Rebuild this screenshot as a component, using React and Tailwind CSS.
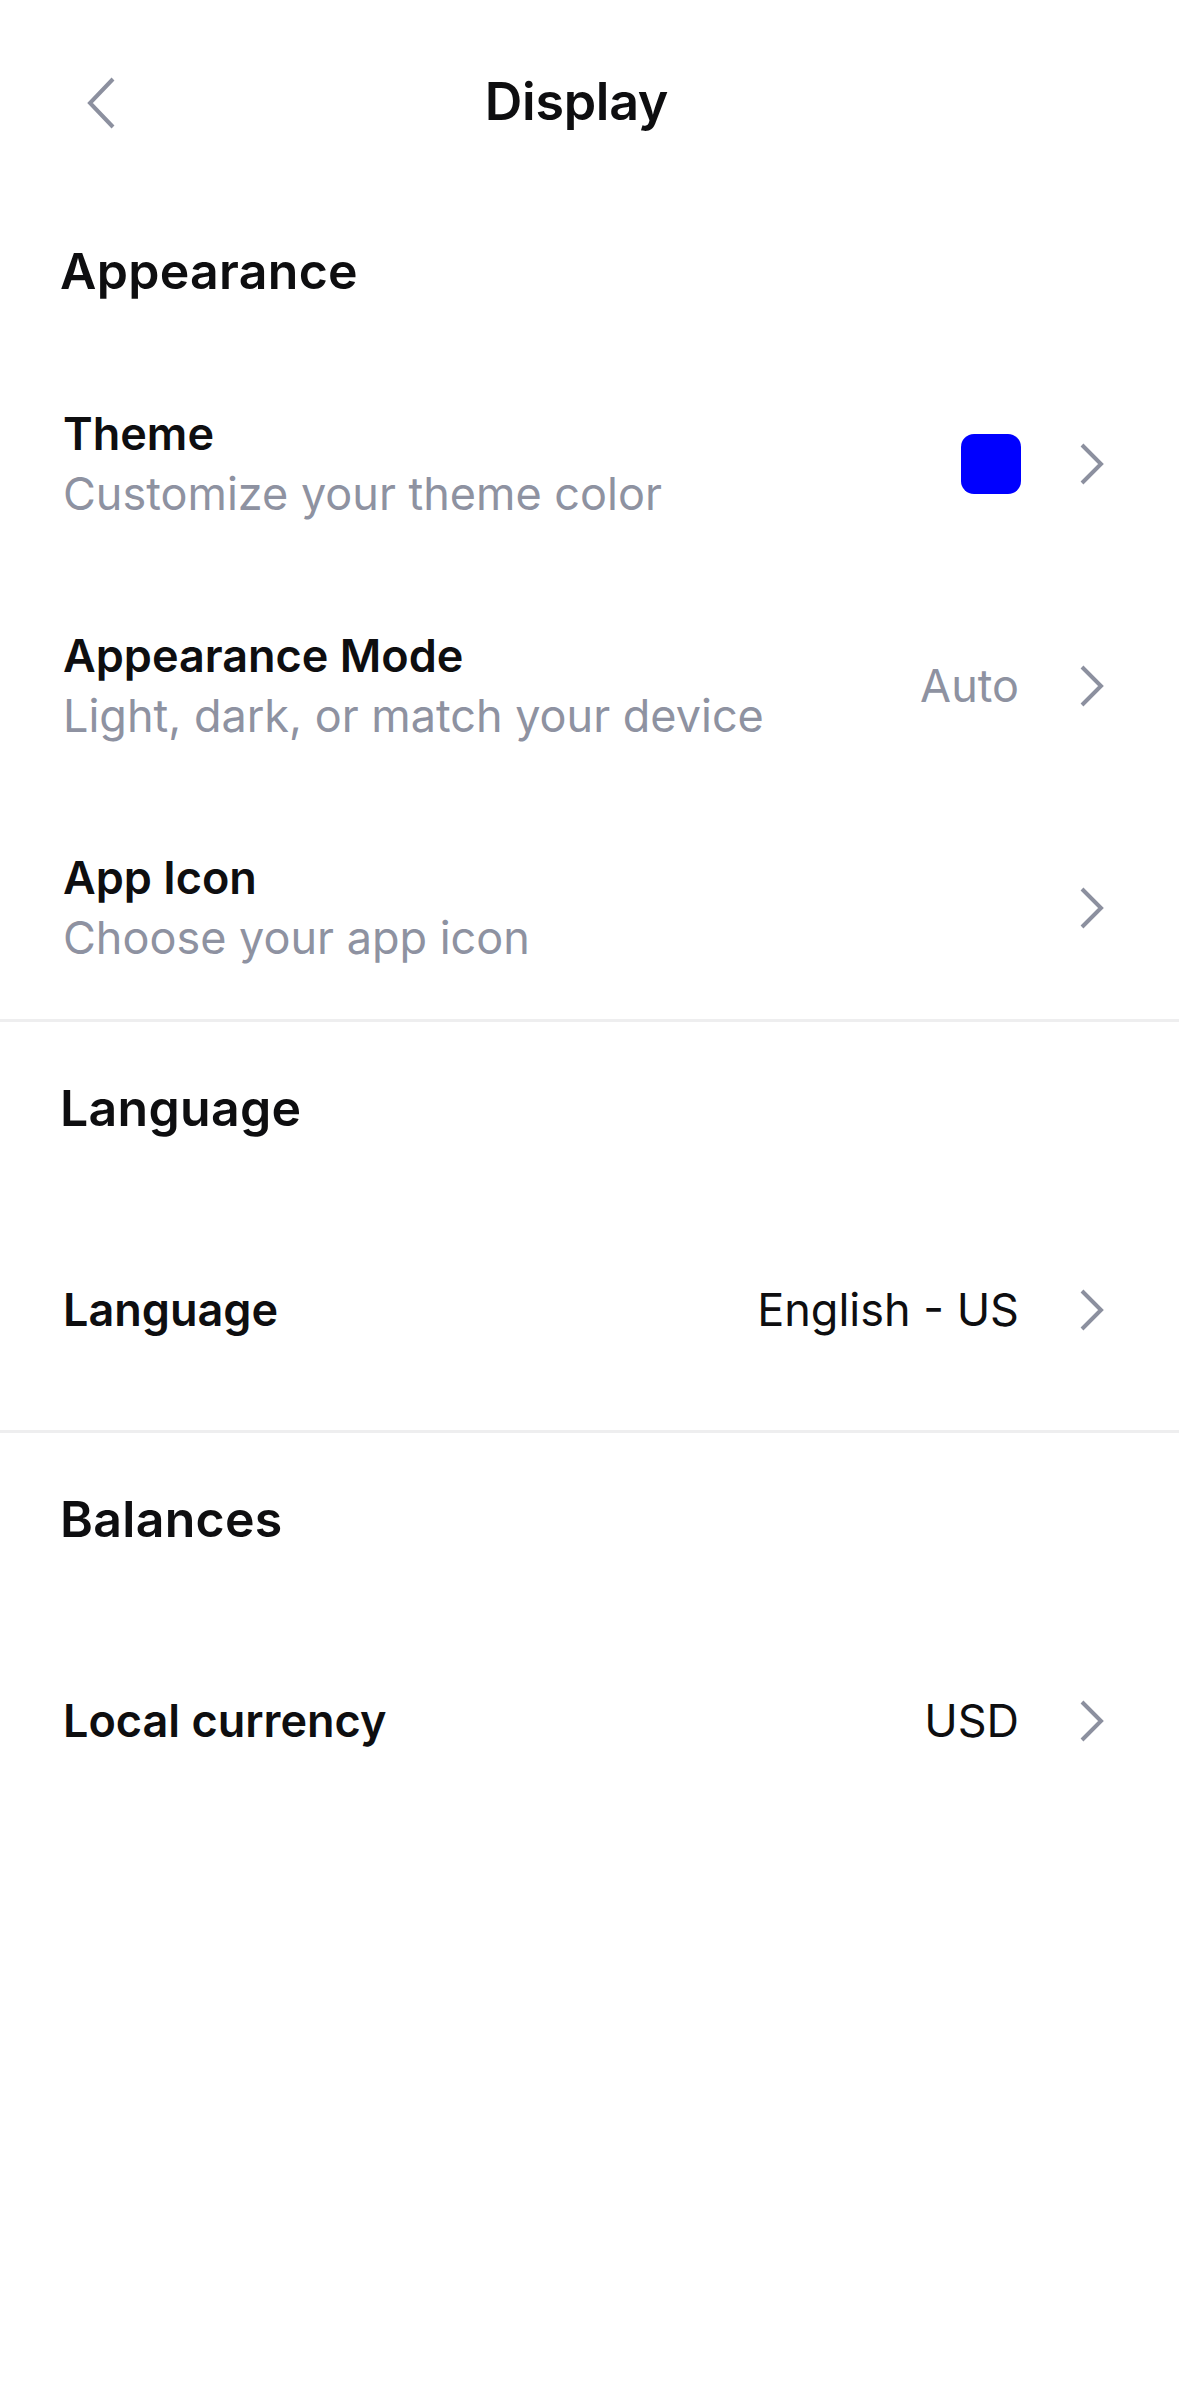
import React from "react";

const FONT = { fontFamily: "Inter, 'Noto Sans', sans-serif" };

function ChevronRight() {
  return (
    <svg width="26" height="42" viewBox="0 0 26 42" className="shrink-0">
      <path d="M3 2 L22 21 L3 40" fill="none" stroke="#8C909F" strokeWidth="4" strokeLinecap="butt" strokeLinejoin="miter" />
    </svg>
  );
}

function ChevronLeft() {
  return (
    <svg width="30" height="52" viewBox="0 0 30 52">
      <path d="M27 2 L4 26 L27 50" fill="none" stroke="#8C909F" strokeWidth="4" />
    </svg>
  );
}

function Row({ title, subtitle, value, valueGray, swatch, h }) {
  return (
    <div className={`flex items-center pl-[63px] pr-[74px] ${h}`}>
      <div className="flex flex-1 flex-col">
        <div className="text-[45px] leading-[60px] font-semibold text-[#0e0e10]">{title}</div>
        {subtitle && (
          <div className="text-[45px] leading-[60px] font-normal text-[#8E92A1]">{subtitle}</div>
        )}
      </div>
      {swatch && <div className="mr-[58px] h-[60px] w-[60px] rounded-[13px] bg-[#0000FF]" />}
      {value && (
        <div className={`mr-[60px] text-[45px] leading-[60px] font-normal ${valueGray ? "text-[#8E92A1]" : "text-[#0e0e10]"}`}>
          {value}
        </div>
      )}
      <ChevronRight />
    </div>
  );
}

function Heading({ children, top }) {
  return (
    <div className={`pl-[60px] ${top} pb-[53px]`}>
      <div className="text-[50px] leading-[58px] font-semibold text-[#0e0e10] tracking-[0.3px]">{children}</div>
    </div>
  );
}

export default function App() {
  return (
    <div style={FONT} className="w-[1179px] min-h-[2396px] bg-white">
      <div className="relative flex h-[204px] items-center justify-center pr-[26px]">
        <div className="absolute left-[86px] top-[77px]">
          <ChevronLeft />
        </div>
        <div className="text-[52px] leading-[64px] font-semibold text-[#0e0e10] tracking-[-0.3px]">Display</div>
      </div>

      <Heading top="pt-[38px]">Appearance</Heading>
      <Row title="Theme" subtitle="Customize your theme color" swatch h="h-[222px]" />
      <Row title="Appearance Mode" subtitle="Light, dark, or match your device" value="Auto" valueGray h="h-[222px]" />
      <Row title="App Icon" subtitle="Choose your app icon" h="h-[222px]" />
      <div className="h-[3px] bg-[#EEEEEF]" />

      <Heading top="pt-[57px]">Language</Heading>
      <Row title="Language" value="English - US" h="h-[240px]" />
      <div className="h-[3px] bg-[#EEEEEF]" />

      <Heading top="pt-[57px]">Balances</Heading>
      <Row title="Local currency" value="USD" h="h-[240px]" />
    </div>
  );
}
